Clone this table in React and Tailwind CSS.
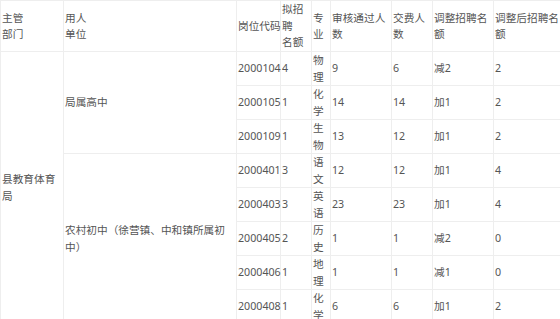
const widths = [63, 173, 44, 31, 19, 61, 41, 61, 67];

const rows = [
  { code: "2000104", plan: "4", major: "物理", passed: "9", paid: "6", adjust: "减2", after: "2" },
  { code: "2000105", plan: "1", major: "化学", passed: "14", paid: "14", adjust: "加1", after: "2" },
  { code: "2000109", plan: "1", major: "生物", passed: "13", paid: "12", adjust: "加1", after: "2" },
  { code: "2000401", plan: "3", major: "语文", passed: "12", paid: "12", adjust: "加1", after: "4" },
  { code: "2000403", plan: "3", major: "英语", passed: "23", paid: "23", adjust: "加1", after: "4" },
  { code: "2000405", plan: "2", major: "历史", passed: "1", paid: "1", adjust: "减2", after: "0" },
  { code: "2000406", plan: "1", major: "地理", passed: "1", paid: "1", adjust: "减1", after: "0" },
  { code: "2000408", plan: "1", major: "化学", passed: "6", paid: "6", adjust: "加1", after: "2" },
];

const cell = "border border-[#eeeeee] px-[1px] py-0 align-middle text-left font-normal";

export default function App() {
  return (
    <div
      className="w-[560px] bg-white text-[#555555] text-[10.67px] leading-[16.5px]"
      style={{ fontFamily: '"Noto Sans", "Noto Sans CJK SC", sans-serif' }}
    >
      <table className="w-[560px] table-fixed border-collapse">
        <colgroup>
          {widths.map((w, i) => (
            <col key={i} style={{ width: w }} />
          ))}
        </colgroup>
        <thead>
          <tr className="h-[51px]">
            <th className={cell}>主管<br />部门</th>
            <th className={cell}>用人<br />单位</th>
            <th className={`${cell} whitespace-nowrap`}>岗位代码</th>
            <th className={cell}>拟招聘<br />名额</th>
            <th className={cell}>专业</th>
            <th className={cell}>审核通过人数</th>
            <th className={cell}>交费人数</th>
            <th className={cell}>调整招聘名额</th>
            <th className={cell}>调整后招聘名额</th>
          </tr>
        </thead>
        <tbody>
          {rows.map((r, i) => (
            <tr key={r.code} className="h-[34px]">
              {i === 0 && (
                <td rowSpan={8} className={cell}>县教育体育局</td>
              )}
              {i === 0 && (
                <td rowSpan={3} className={cell}>局属高中</td>
              )}
              {i === 3 && (
                <td rowSpan={5} className={cell}>农村初中（徐营镇、中和镇所属初中）</td>
              )}
              <td className={`${cell} whitespace-nowrap`}>{r.code}</td>
              <td className={cell}>{r.plan}</td>
              <td className={cell}>{r.major}</td>
              <td className={cell}>{r.passed}</td>
              <td className={cell}>{r.paid}</td>
              <td className={cell}>{r.adjust}</td>
              <td className={cell}>{r.after}</td>
            </tr>
          ))}
        </tbody>
      </table>
    </div>
  );
}
